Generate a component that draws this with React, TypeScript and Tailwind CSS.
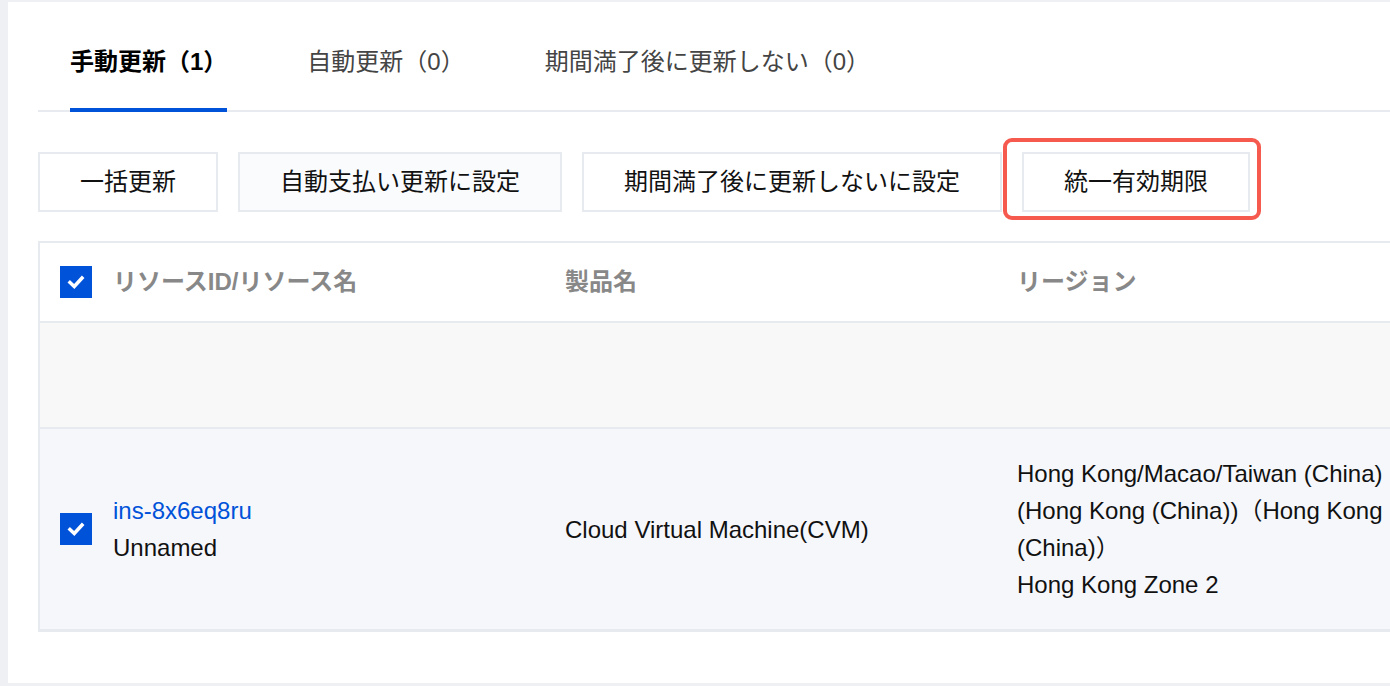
import React from "react";

const font = { fontFamily: '"Liberation Sans", "Noto Sans CJK JP", sans-serif' };

function Check() {
  return (
    <div className="flex h-8 w-8 shrink-0 items-center justify-center bg-[#0052d9]">
      <svg viewBox="0 0 16 16" className="h-[20px] w-[20px]" fill="none">
        <path d="M3.2 8.4 L6.6 11.6 L12.8 4.8" stroke="white" strokeWidth="2.8" strokeLinecap="square" />
      </svg>
    </div>
  );
}

const tabs = [
  { label: "手動更新（1）", active: true },
  { label: "自動更新（0）", active: false },
  { label: "期間満了後に更新しない（0）", active: false },
];

export default function App() {
  return (
    <div
      className="h-[686px] w-full overflow-hidden bg-[#eef0f4] pb-[3px] pl-2 pt-[2px] text-[24px] text-[#111]"
      style={font}
    >
      <div className="h-full bg-white pl-[30px]">
        {/* Tabs */}
        <div className="flex h-[110px] gap-[80px] border-b-2 border-[#e7eaef] pl-8">
          {tabs.map((t) => (
            <div
              key={t.label}
              className={
                t.active
                  ? "-mb-[2px] border-b-4 border-[#0052d9] pt-[42px] pb-[28px] leading-[36px] font-bold text-black"
                  : "-mb-[2px] border-b-4 border-transparent pt-[42px] pb-[28px] leading-[36px] text-[#444]"
              }
            >
              {t.label}
            </div>
          ))}
        </div>

        {/* Actions */}
        <div className="mt-10 flex gap-[20px]">
          <button className="h-[60px] border-2 border-[#e7eaef] bg-white px-10 leading-[36px]">一括更新</button>
          <button className="h-[60px] border-2 border-[#e7eaef] bg-[#fafbfd] px-10 leading-[36px]">
            自動支払い更新に設定
          </button>
          <button className="h-[60px] border-2 border-[#e7eaef] bg-white px-10 leading-[36px]">
            期間満了後に更新しないに設定
          </button>
          <div className="relative">
            <button className="h-[60px] border-2 border-[#e7eaef] bg-white px-10 leading-[36px]">統一有効期限</button>
            <div className="pointer-events-none absolute -bottom-[8px] -left-[19px] -right-[11px] -top-[14px] rounded-[9px] border-4 border-[#f65a4e]" />
          </div>
        </div>

        {/* Table */}
        <div className="mt-[29px] w-[1600px] border-l-2 border-t-2 border-[#e7eaef]">
          <div className="flex h-[80px] items-center border-b-2 border-[#e7eaef] bg-white font-bold text-[#888]">
            <div className="flex w-[503px] items-center gap-[21px] pl-5">
              <Check />
              <span>リソースID/リソース名</span>
            </div>
            <div className="w-[452px] pl-[22px]">製品名</div>
            <div className="pl-[22px]">リージョン</div>
          </div>

          <div className="h-[106px] border-b-2 border-[#e7eaef] bg-[#f8f8f9]" />

          <div className="flex h-[203px] items-center border-b-[3px] border-[#e7eaef] bg-[#f6f7fb] leading-[37px]">
            <div className="flex w-[503px] items-center gap-[21px] pl-5">
              <Check />
              <div>
                <div className="text-[#0052d9]">ins-8x6eq8ru</div>
                <div>Unnamed</div>
              </div>
            </div>
            <div className="w-[452px] pl-[22px]">Cloud Virtual Machine(CVM)</div>
            <div className="whitespace-nowrap pl-[22px]">
              <div>Hong Kong/Macao/Taiwan (China)</div>
              <div>(Hong Kong (China))（Hong Kong</div>
              <div>(China)）</div>
              <div>Hong Kong Zone 2</div>
            </div>
          </div>
        </div>
      </div>
    </div>
  );
}
